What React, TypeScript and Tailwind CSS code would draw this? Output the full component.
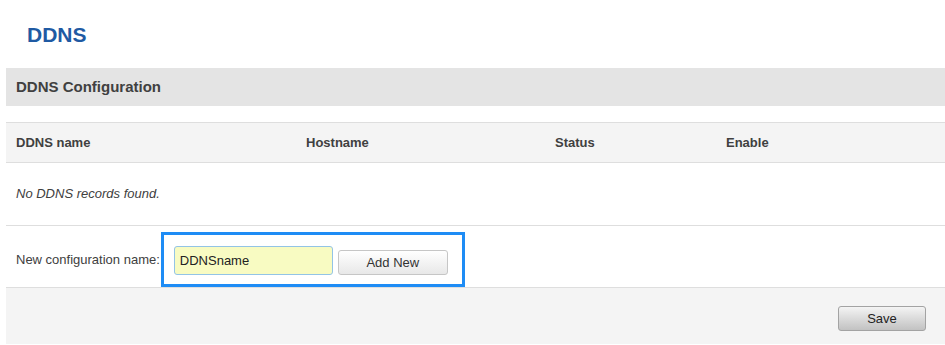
export default function App() {
  const font = { fontFamily: '"Liberation Sans", Arial, sans-serif' };
  const columns = ["DDNS name", "Hostname", "Status", "Enable"];
  return (
    <div className="h-[345px] w-[945px] overflow-hidden bg-white text-[13px] text-[#404040]" style={font}>
      <div className="h-[68px] pl-[27px] pt-[23px]">
        <h2 className="text-[21px] font-bold leading-[24px] text-[#1f5aa3]">DDNS</h2>
      </div>
      <div className="ml-[6px]">
        <div className="flex h-[38px] items-center bg-[#e4e4e4] pl-[10px] text-[15px] font-bold text-[#404040]">
          DDNS Configuration
        </div>
        <div className="mt-[16px] grid h-[41px] grid-cols-[290px_249px_171px_1fr] items-center border-y border-[#dedede] bg-[#f4f4f4] pl-[10px] font-bold text-[#404040]">
          {columns.map((c) => (
            <span key={c}>{c}</span>
          ))}
        </div>
        <div className="flex h-[63px] items-center border-b border-[#dedede] pl-[10px] italic">
          No DDNS records found.
        </div>
        <div className="flex h-[61px] items-end">
          <span className="mb-[19px] ml-[10px] mr-[1px] leading-[16px]">New configuration name:</span>
          <div className="flex h-[55px] items-start border-[3px] border-[#1e8cf5] pl-[10px] pr-[14px] pt-[11px]">
            <input
              className="h-[29px] w-[159px] rounded-[3px] border border-[#93c4e6] bg-[#f8fbc2] pl-[5px] text-[13px] text-[#222] outline-none"
              defaultValue="DDNSname"
              spellCheck={false}
            />
            <button className="ml-[5px] mt-[4px] h-[25px] w-[110px] rounded-[3px] border border-[#c6c6c6] bg-gradient-to-b from-white to-[#e8e8e8] text-[13px] text-[#333]">
              Add New
            </button>
          </div>
        </div>
        <div className="flex h-[57px] justify-end border-t border-[#dedede] bg-[#f4f4f4] pr-[19px] pt-[18px]">
          <button className="h-[25px] w-[88px] rounded-[3px] border border-[#a3a3a3] bg-gradient-to-b from-[#f4f4f4] to-[#c2c2c2] text-[13px] text-[#222]">
            Save
          </button>
        </div>
      </div>
    </div>
  );
}
